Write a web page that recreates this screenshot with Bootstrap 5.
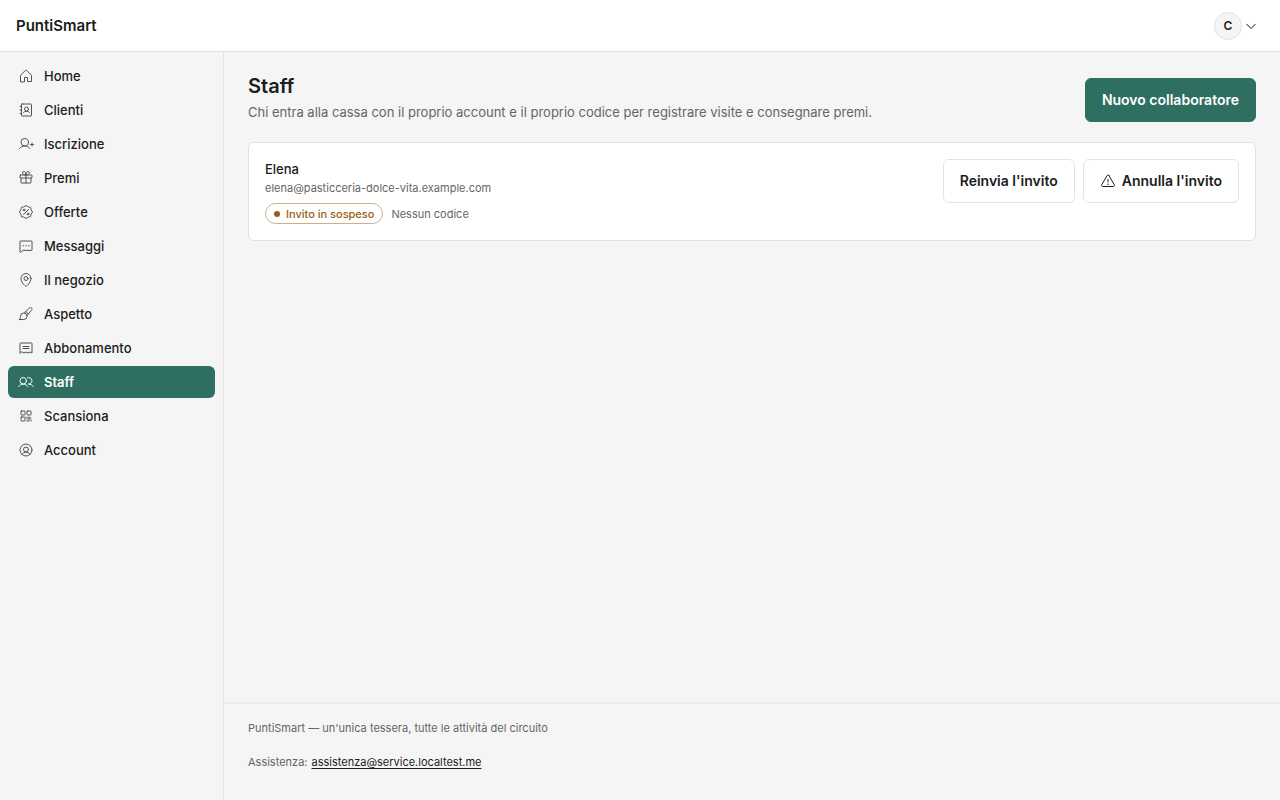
<!DOCTYPE html>
<html lang="it">
<head>
<meta charset="utf-8">
<meta name="viewport" content="width=device-width, initial-scale=1">
<title>Staff – PuntiSmart</title>
<link href="https://cdn.jsdelivr.net/npm/bootstrap@5.3.0/dist/css/bootstrap.min.css" rel="stylesheet">
<style>
:root { --ink:#1a1d1c; --muted-ink:#646665; --line:#e2e2e2; --paper:#f5f5f5; --brand:#2f6f62; --pending:#965e14; }
body { font-family: Inter, "Liberation Sans", sans-serif; font-size: 13px; line-height: 20px; color: var(--ink); background: var(--paper); }
.topbar { height: 52px; border-bottom: 1px solid var(--line); }
.brand { font-size: 15px; line-height: 24px; color: var(--ink); }
.ico { width: 16px; height: 16px; flex: none; fill: none; stroke: currentColor; stroke-width: 16; stroke-linecap: round; stroke-linejoin: round; }
.ico .dot { fill: currentColor; stroke: none; }
.account { color: #555; }
.account .ico { width: 10px; height: 10px; stroke-width: 20; }
.avatar { width: 28px; height: 28px; font-size: 12px; color: var(--ink); background: var(--paper); border: 1px solid var(--line); }
.sidebar { width: 224px; flex: none; border-right: 1px solid var(--line); }
.side-nav { gap: 2px; }
.side-nav .nav-link { height: 32px; padding: 0 10px; gap: 10px; border-radius: 6px; color: var(--ink); font-weight: 500; }
.side-nav .nav-link .ico { color: #505352; }
.side-nav .nav-link.active { background: var(--brand); color: #fff; font-weight: 600; }
.side-nav .nav-link.active .ico { color: #fff; }
.page { padding: 20px 24px; }
.page h1 { font-size: 20px; line-height: 28px; margin-bottom: 2px; }
.soft { color: var(--muted-ink); }
.tiny { font-size: 11px; line-height: 16px; }
.btn { height: 44px; padding: 0 16px; gap: 6px; border-radius: 6px; font-size: 14px; line-height: 20px; font-weight: 600; }
.btn-brand { --bs-btn-bg: var(--brand); --bs-btn-color:#fff; --bs-btn-border-color: var(--brand); --bs-btn-hover-bg:#275d52; --bs-btn-hover-color:#fff; }
.btn-plain { --bs-btn-bg:#fff; --bs-btn-color: var(--ink); --bs-btn-border-color: var(--line); --bs-btn-hover-bg: var(--paper); --bs-btn-hover-border-color: var(--line); }
.member { margin-top: 20px; padding: 16px; border: 1px solid var(--line); border-radius: 6px; }
.member-mail { line-height: 18px; margin-bottom: 6px; }
.pending { height: 21px; padding: 0 8px; gap: 6px; color: var(--pending); border: 1px solid #cbb08b; font-weight: 500; }
.pending::before { content: ""; width: 6px; height: 6px; border-radius: 50%; background: currentColor; }
.page-foot { padding: 16px 24px; border-top: 2px solid #ebebeb; }
.page-foot a { color: var(--ink); text-underline-offset: 2px; }
.support { min-height: 44px; }
</style>
</head>
<body class="d-flex flex-column min-vh-100">
<header class="topbar bg-white d-flex align-items-center justify-content-between ps-3 pe-4">
  <a class="brand fw-semibold text-decoration-none" href="#">PuntiSmart</a>
  <button type="button" class="account border-0 bg-transparent p-0 d-flex align-items-center gap-1" aria-label="Menu account">
    <span class="avatar rounded-circle d-flex align-items-center justify-content-center fw-semibold">C</span>
    <svg class="ico" viewBox="32 32 192 192" aria-hidden="true"><path d="M208 96l-80 80-80-80"/></svg>
  </button>
</header>
<div class="d-flex flex-grow-1">
  <aside class="sidebar p-2">
    <nav class="side-nav nav flex-column flex-nowrap" aria-label="Principale">
      <a class="nav-link d-flex align-items-center" href="#"><svg class="ico" viewBox="0 0 256 256"><path d="M104 216V152h48v64h64V120a8 8 0 0 0-2.34-5.66l-80-80a8 8 0 0 0-11.32 0l-80 80A8 8 0 0 0 40 120v96Z"/></svg>Home</a>
      <a class="nav-link d-flex align-items-center" href="#"><svg class="ico" viewBox="0 0 256 256"><rect x="56" y="32" width="160" height="192" rx="8"/><circle cx="136" cy="112" r="32"/><path d="M88 168a60 60 0 0 1 96 0M32 72h24M32 128h24M32 184h24"/></svg>Clienti</a>
      <a class="nav-link d-flex align-items-center" href="#"><svg class="ico" viewBox="0 0 256 256"><circle cx="108" cy="100" r="60"/><path d="M24 200c20.6-24.5 49.6-40 84-40s63.400 15.500 84 40M200 136h48M224 112v48"/></svg>Iscrizione</a>
      <a class="nav-link d-flex align-items-center" href="#"><svg class="ico" viewBox="0 0 256 256"><rect x="32" y="80" width="192" height="48" rx="8"/><path d="M208 128v72a8 8 0 0 1-8 8H56a8 8 0 0 1-8-8V128M128 80v128M176.800 31.200c9.300 9.300 9.900 25.100 0 33.800C159.900 80 128 80 128 80s0-31.900 15-48.800c8.700-9.900 24.500-9.300 33.800 0ZM79.200 31.200c-9.300 9.300-9.900 25.100 0 33.800C96.100 80 128 80 128 80s0-31.900-15-48.800c-8.700-9.900-24.500-9.300-33.800 0Z"/></svg>Premi</a>
      <a class="nav-link d-flex align-items-center" href="#"><svg class="ico" viewBox="0 0 256 256"><path d="M54.460 201.540c-9.200-9.200-3.100-28.530-7.780-39.850C41.820 150 24 140.500 24 128s17.820-22 22.680-33.690C51.360 83 45.260 63.660 54.460 54.460S83 51.360 94.310 46.680C106.050 41.820 115.500 24 128 24s22 17.820 33.690 22.680c11.320 4.680 30.650-1.420 39.850 7.780s3.100 28.530 7.780 39.850C214.180 106.050 232 115.500 232 128s-17.820 22-22.680 33.690c-4.680 11.320 1.420 30.650-7.780 39.850s-28.530 3.100-39.850 7.780C150 214.180 140.500 232 128 232s-22-17.820-33.690-22.680C83 204.640 63.660 210.740 54.460 201.540ZM88 168l80-80"/><circle cx="96" cy="96" r="14"/><circle cx="160" cy="160" r="14"/></svg>Offerte</a>
      <a class="nav-link d-flex align-items-center" href="#"><svg class="ico" viewBox="0 0 256 256"><path d="M77.400 200l-32.200 27.700A8 8 0 0 1 32 221.500V56a8 8 0 0 1 8-8H216a8 8 0 0 1 8 8V192a8 8 0 0 1-8 8Z"/><circle class="dot" cx="84" cy="124" r="11"/><circle class="dot" cx="128" cy="124" r="11"/><circle class="dot" cx="172" cy="124" r="11"/></svg>Messaggi</a>
      <a class="nav-link d-flex align-items-center" href="#"><svg class="ico" viewBox="0 0 256 256"><circle cx="128" cy="104" r="32"/><path d="M208 104c0 72-80 128-80 128S48 176 48 104a80 80 0 0 1 160 0Z"/></svg>Il negozio</a>
      <a class="nav-link d-flex align-items-center" href="#"><svg class="ico" viewBox="0 0 256 256"><path d="M24 216H92a52 52 0 1 0-52-52c0 36-16 52-16 52ZM101 113L179 35c12-12 29-12 38-3s9 26-3 38L143 155M126 88l42 42"/></svg>Aspetto</a>
      <a class="nav-link d-flex align-items-center" href="#"><svg class="ico" viewBox="0 0 256 256"><path d="M32 208V56a8 8 0 0 1 8-8H216a8 8 0 0 1 8 8V208l-32-16-32 16-32-16-32 16-32-16ZM80 104h96M80 136h96"/></svg>Abbonamento</a>
      <a class="nav-link active d-flex align-items-center" href="#" aria-current="page"><svg class="ico" viewBox="0 0 256 256"><circle cx="84" cy="108" r="52"/><path d="M10.230 200a88 88 0 0 1 147.540 0M172 160a87.930 87.930 0 0 1 73.770 40M152.690 59.700A52 52 0 1 1 172 160"/></svg>Staff</a>
      <a class="nav-link d-flex align-items-center" href="#"><svg class="ico" viewBox="0 0 256 256"><rect x="48" y="48" width="64" height="64" rx="8"/><rect x="48" y="144" width="64" height="64" rx="8"/><rect x="144" y="48" width="64" height="64" rx="8"/><path d="M144 144v32M144 208h32V144M176 160h32M208 192v16"/></svg>Scansiona</a>
      <a class="nav-link d-flex align-items-center" href="#"><svg class="ico" viewBox="0 0 256 256"><circle cx="128" cy="128" r="96"/><circle cx="128" cy="120" r="40"/><path d="M63.800 199.370a72 72 0 0 1 128.400 0"/></svg>Account</a>
    </nav>
  </aside>
  <div class="d-flex flex-column flex-grow-1">
    <main class="page flex-grow-1">
      <div class="d-flex align-items-end justify-content-between gap-3">
        <div>
          <h1 class="fw-semibold">Staff</h1>
          <p class="soft mb-0">Chi entra alla cassa con il proprio account e il proprio codice per registrare visite e consegnare premi.</p>
        </div>
        <button type="button" class="btn btn-brand text-nowrap">Nuovo collaboratore</button>
      </div>
      <section class="member bg-white d-flex align-items-start justify-content-between gap-3">
        <div>
          <div class="fw-medium">Elena</div>
          <div class="soft tiny member-mail">elena@pasticceria-dolce-vita.example.com</div>
          <div class="d-flex align-items-center gap-2 tiny">
            <span class="pending rounded-pill d-inline-flex align-items-center">Invito in sospeso</span>
            <span class="soft">Nessun codice</span>
          </div>
        </div>
        <div class="d-flex gap-2">
          <button type="button" class="btn btn-plain">Reinvia l'invito</button>
          <button type="button" class="btn btn-plain d-inline-flex align-items-center"><svg class="ico" viewBox="0 0 256 256" aria-hidden="true"><path d="M142.410 40.220l87.460 151.870C236 202.790 228.080 216 215.460 216H40.540C27.920 216 20 202.790 26.130 192.090L113.590 40.220C119.890 29.260 136.110 29.260 142.410 40.220ZM128 104v40"/><circle class="dot" cx="128" cy="180" r="11"/></svg>Annulla l'invito</button>
        </div>
      </section>
    </main>
    <footer class="page-foot soft tiny">
      <div class="mb-1">PuntiSmart — un'unica tessera, tutte le attività del circuito</div>
      <div class="support d-flex align-items-center gap-1"><span>Assistenza:</span><a href="mailto:assistenza@service.localtest.me">assistenza@service.localtest.me</a></div>
    </footer>
  </div>
</div>
<script src="https://cdn.jsdelivr.net/npm/bootstrap@5.3.0/dist/js/bootstrap.bundle.min.js"></script>
</body>
</html>
